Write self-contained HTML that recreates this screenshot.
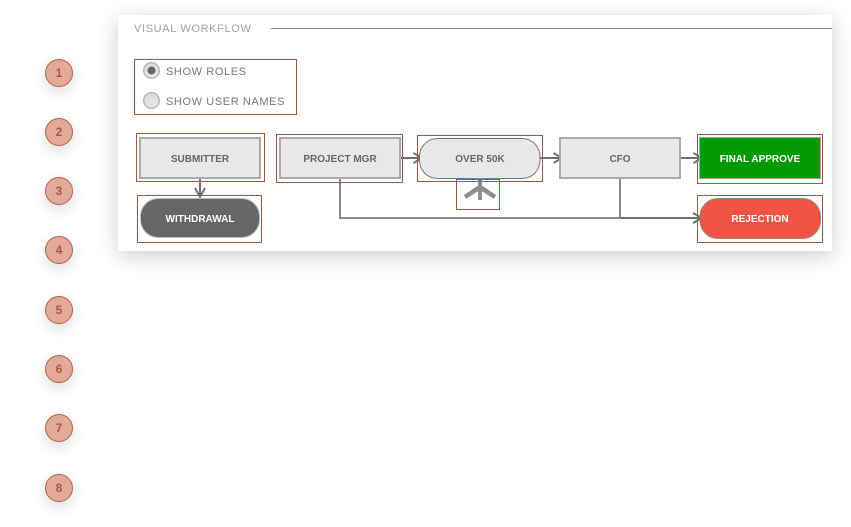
<!DOCTYPE html>
<html>
<head>
<meta charset="utf-8">
<style>
html,body{margin:0;padding:0;background:#fff;width:851px;height:527px;overflow:hidden;font-family:"Liberation Sans",Arial,sans-serif}
.n{position:absolute;left:45px;width:26px;height:26px;border:1px solid #b4614a;border-radius:50%;background:#e2aa98;color:#a9573f;font-weight:bold;font-size:12px;line-height:26px;text-align:center;box-shadow:0 5px 14px rgba(0,0,0,.14)}
#card{position:absolute;left:118px;top:15px;width:714px;height:236px;background:#fff;box-shadow:0 5px 20px rgba(0,0,0,.2)}
svg{position:absolute;left:0;top:0}
.r{fill:none;stroke:#a9563a;stroke-width:1}
.t,.l,.h{position:absolute;white-space:nowrap}
.t{width:120px;height:14px;line-height:14px;text-align:center;font-weight:bold;font-size:10px;color:#666}
.w{color:#fff}
.l{left:166px;height:14px;line-height:14px;font-size:11px;letter-spacing:.6px;color:#777}
.h{left:134px;top:22px;height:14px;line-height:14px;font-size:11px;letter-spacing:.65px;color:#a0a0a0}
</style>
</head>
<body>
<div class="n" style="top:59px">1</div>
<div class="n" style="top:118px">2</div>
<div class="n" style="top:177px">3</div>
<div class="n" style="top:236px">4</div>
<div class="n" style="top:296px">5</div>
<div class="n" style="top:355px">6</div>
<div class="n" style="top:414px">7</div>
<div class="n" style="top:474px">8</div>
<div id="card"></div>
<svg width="851" height="527" viewBox="0 0 851 527">
<defs>
<linearGradient id="g" x1="0" y1="0" x2="0" y2="1"><stop offset="0" stop-color="#dcdcdc"/><stop offset="1" stop-color="#e8e8e8"/></linearGradient>
</defs>
<rect x="271" y="28" width="561" height="1" fill="#8c8c8c"/>

<rect class="r" x="134.500" y="59.500" width="162" height="55"/>
<circle cx="151.500" cy="70.500" r="7.800" fill="url(#g)" stroke="#b4b4b4" stroke-width="1.400"/>
<circle cx="151.500" cy="70.500" r="4" fill="#666"/>
<circle cx="151.500" cy="100.500" r="7.800" fill="url(#g)" stroke="#b4b4b4" stroke-width="1.400"/>

<g fill="none" stroke="#8a8a8a" stroke-width="2">
<path d="M340 178V218H620"/>
<path d="M620 178V218"/>
</g>
<g fill="none" stroke="#707070" stroke-width="2">
<path d="M620 218H702M693 213L702 218L693 223"/>
<path d="M401 158H422M413.500 153L422 158L413.500 163"/>
<path d="M540 158H562M553.500 153L562 158L553.500 163"/>
<path d="M680 158H702M693.500 153L702 158L693.500 163"/>
<path d="M200 178V197M195 188L200 197L205 188"/>
</g>

<rect x="140" y="138" width="120" height="40" fill="#e8e8e8" stroke="#aaa" stroke-width="2"/>
<rect x="280" y="138" width="120" height="40" fill="#e8e8e8" stroke="#aaa" stroke-width="2"/>
<rect x="419.500" y="138.500" width="120.500" height="40" rx="18" fill="#e8e8e8" stroke="#777" stroke-width="1"/>
<rect x="560" y="138" width="120" height="40" fill="#e8e8e8" stroke="#aaa" stroke-width="2"/>
<rect x="699.500" y="137.500" width="121" height="41" fill="#009900" stroke="#aaa" stroke-width="1"/>
<rect x="140.500" y="198.500" width="119" height="39" rx="18" fill="#666" stroke="#bbb" stroke-width="1"/>
<rect x="700" y="198.500" width="120.500" height="40" rx="18" fill="#f15442" stroke="#888" stroke-width="1"/>

<g fill="none" stroke="#8e8e8e" stroke-width="4">
<path d="M480 178V200"/>
<path d="M465 197L480 187L495 197" stroke-width="4.500"/>
</g>

<rect class="r" x="136.500" y="133.500" width="128" height="48"/>
<rect class="r" x="137.500" y="195.500" width="124" height="47"/>
<rect class="r" x="276.500" y="134.500" width="126" height="48"/>
<rect class="r" x="417.500" y="135.500" width="125" height="46"/>
<rect class="r" x="456.500" y="179.500" width="43" height="30"/>
<rect class="r" x="697.500" y="134.500" width="125" height="49"/>
<rect class="r" x="697.500" y="195.500" width="125" height="47"/>
</svg>
<div class="h">VISUAL WORKFLOW</div>
<div class="l" style="top:65px">SHOW ROLES</div>
<div class="l" style="top:95px">SHOW USER NAMES</div>
<div class="t" style="left:140px;top:153px">SUBMITTER</div>
<div class="t" style="left:280px;top:153px">PROJECT MGR</div>
<div class="t" style="left:420px;top:153px">OVER 50K</div>
<div class="t" style="left:560px;top:153px">CFO</div>
<div class="t w" style="left:700px;top:153px">FINAL APPROVE</div>
<div class="t w" style="left:140px;top:213px">WITHDRAWAL</div>
<div class="t w" style="left:700px;top:213px">REJECTION</div>
</body>
</html>
